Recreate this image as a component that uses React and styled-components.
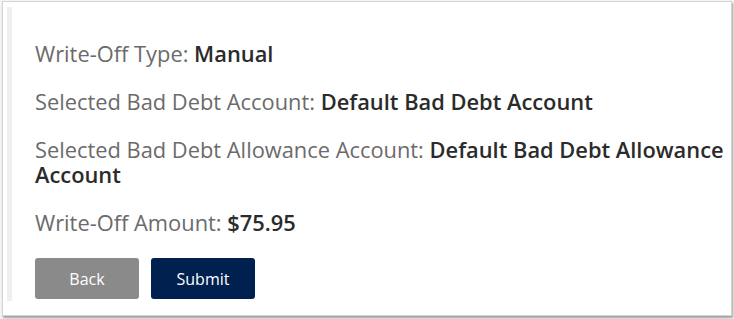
import React from "react";
import styled, { createGlobalStyle } from "styled-components";

const Global = createGlobalStyle`
  html, body { margin: 0; padding: 0; background: #f4f4f4; }
  body { font-family: "Open Sans", "Noto Sans", sans-serif; width: 734px; height: 319px; overflow: hidden; }
`;

const Frame = styled.div`
  box-sizing: border-box;
  margin: 1px 0 0 2px;
  width: 730px;
  height: 315px;
  background: #ffffff;
  border: 1px solid #d4d4d4;
  box-shadow: 1px 2px 2px rgba(0, 0, 0, 0.35);
  display: flex;
`;

const Strip = styled.div`
  width: 5px;
  margin: 5px 0 14px 4px;
  background: #efefef;
`;

const Content = styled.div`
  flex: 1;
  padding: 39px 0 0 23px;
  display: flex;
  flex-direction: column;
`;

const Row = styled.p`
  margin: 0 0 23px 0;
  font-size: 21.85px;
  line-height: 25px;
  color: #6b6b6b;
`;

const Value = styled.strong`
  font-weight: 600;
  color: #2b2b2b;
`;

const Buttons = styled.div`
  display: flex;
  gap: 12px;
  margin-top: 0;
`;

const Button = styled.button`
  width: 104px;
  height: 41px;
  border: none;
  border-radius: 3px;
  font-family: inherit;
  font-size: 16px;
  color: #ffffff;
  background: ${(p) => (p.$primary ? "#00204f" : "#8a8a8a")};
  cursor: pointer;
`;

export default function App() {
  return (
    <>
      <Global />
      <Frame>
        <Strip />
        <Content>
          <Row>
            Write-Off Type: <Value>Manual</Value>
          </Row>
          <Row>
            Selected Bad Debt Account: <Value>Default Bad Debt Account</Value>
          </Row>
          <Row>
            Selected Bad Debt Allowance Account: <Value>Default Bad Debt Allowance Account</Value>
          </Row>
          <Row>
            Write-Off Amount: <Value>$75.95</Value>
          </Row>
          <Buttons>
            <Button>Back</Button>
            <Button $primary>Submit</Button>
          </Buttons>
        </Content>
      </Frame>
    </>
  );
}
